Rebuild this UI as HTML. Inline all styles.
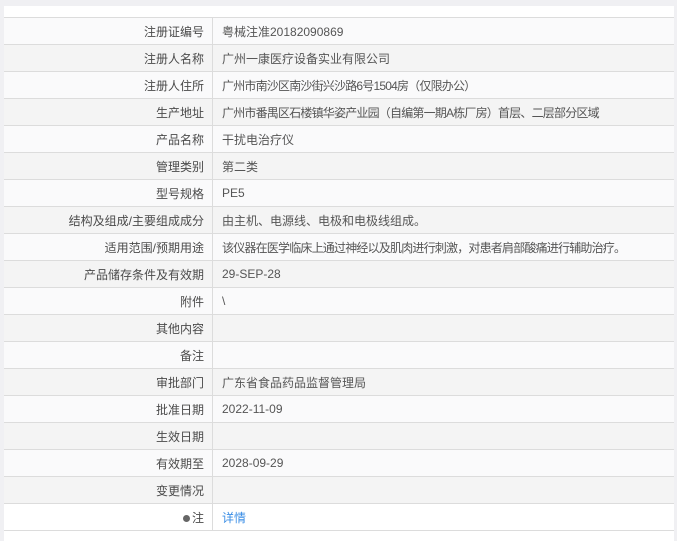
<!DOCTYPE html>
<html><head><meta charset="utf-8">
<style>
html,body{margin:0;padding:0;width:677px;height:541px;overflow:hidden;background:#f0f0f3;}
.wrap{position:absolute;left:4px;top:6px;width:670px;height:535px;background:#fff;}
table{position:absolute;left:0;top:11px;width:670px;border-collapse:collapse;font-family:"Liberation Sans","Noto Sans CJK SC",sans-serif;font-size:12px;color:#555;}
td{height:26px;padding:0;border-top:1px solid #dcdcdc;border-bottom:1px solid #dcdcdc;white-space:nowrap;}
td.l{width:200px;text-align:right;padding-right:8px;border-right:1px solid #dcdcdc;color:#4a4a4a;}
td.v{padding-left:9px;}
.c{letter-spacing:-0.8px;}
tr:nth-child(odd){background:#fafafb;}
tr:nth-child(even){background:#f4f4f4;}
tr:last-child{background:#fff;}
a{color:#3a8ee6;text-decoration:none;}
</style></head><body>
<div class="wrap">
<table>
<tr><td class="l">注册证编号</td><td class="v">粤械注准20182090869</td></tr>
<tr><td class="l">注册人名称</td><td class="v">广州一康医疗设备实业有限公司</td></tr>
<tr><td class="l">注册人住所</td><td class="v"><span class="c">广州市南沙区南沙街兴沙路6号1504房（仅限办公）</span></td></tr>
<tr><td class="l">生产地址</td><td class="v"><span class="c">广州市番禺区石楼镇华姿产业园（自编第一期A栋厂房）首层、二层部分区域</span></td></tr>
<tr><td class="l">产品名称</td><td class="v">干扰电治疗仪</td></tr>
<tr><td class="l">管理类别</td><td class="v">第二类</td></tr>
<tr><td class="l">型号规格</td><td class="v">PE5</td></tr>
<tr><td class="l">结构及组成/主要组成成分</td><td class="v">由主机、电源线、电极和电极线组成。</td></tr>
<tr><td class="l">适用范围/预期用途</td><td class="v"><span class="c">该仪器在医学临床上通过神经以及肌肉进行刺激，对患者肩部酸痛进行辅助治疗。</span></td></tr>
<tr><td class="l">产品储存条件及有效期</td><td class="v">29-SEP-28</td></tr>
<tr><td class="l">附件</td><td class="v">\</td></tr>
<tr><td class="l">其他内容</td><td class="v"></td></tr>
<tr><td class="l">备注</td><td class="v"></td></tr>
<tr><td class="l">审批部门</td><td class="v">广东省食品药品监督管理局</td></tr>
<tr><td class="l">批准日期</td><td class="v">2022-11-09</td></tr>
<tr><td class="l">生效日期</td><td class="v"></td></tr>
<tr><td class="l">有效期至</td><td class="v">2028-09-29</td></tr>
<tr><td class="l">变更情况</td><td class="v"></td></tr>
<tr><td class="l"><span style="display:inline-block;width:7px;height:7px;border-radius:50%;background:#666;margin-right:2px;vertical-align:0"></span>注</td><td class="v"><a>详情</a></td></tr>
</table>
</div>
</body></html>
